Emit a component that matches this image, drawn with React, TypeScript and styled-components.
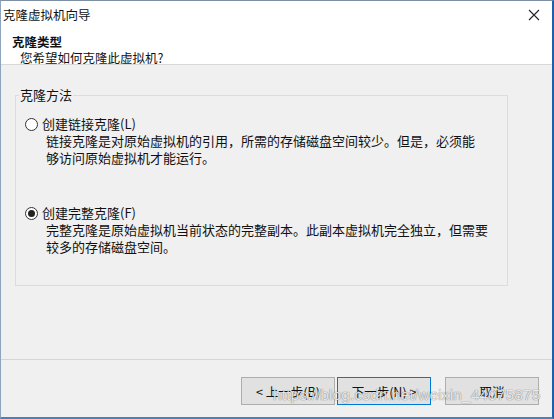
import styled, { createGlobalStyle } from "styled-components";
import { useState } from "react";

const GlobalStyle = createGlobalStyle`
  html, body {
    margin: 0;
    padding: 0;
    background: #f0f0f0;
  }
  #root {
    width: 554px;
    height: 419px;
  }
`;

const ui = `"Noto Sans CJK SC", "Liberation Sans", sans-serif`;

const Window = styled.div`
  position: relative;
  display: flex;
  flex-direction: column;
  width: 554px;
  height: 419px;
  box-sizing: border-box;
  border-top: 1px solid #7d8fa5;
  border-left: 1px solid #8ea3bd;
  border-right: 2px solid #1c5fae;
  border-bottom: 2px solid #4f7fb8;
  background: #f0f0f0;
  font-family: ${ui};
  color: #111;
  overflow: hidden;
`;

const Top = styled.div`
  background: #fff;
  border-bottom: 1px solid #d9d9d9;
`;

const TitleBar = styled.div`
  display: flex;
  align-items: center;
  justify-content: space-between;
  height: 27px;
  padding: 0 12px 0 2px;
`;

const TitleText = styled.span`
  font-size: 12.5px;
  line-height: 16px;
`;

const CloseBtn = styled.span`
  display: flex;
  width: 12px;
  height: 12px;
  margin-top: 1px;
`;

const Header = styled.div`
  display: flex;
  flex-direction: column;
  height: 36px;
  padding-left: 11px;
`;

const HeaderTitle = styled.span`
  font-size: 12.5px;
  font-weight: bold;
  line-height: 16px;
  margin-top: 6px;
`;

const HeaderSub = styled.span`
  font-size: 12.5px;
  line-height: 15px;
  padding-left: 8px;
`;

const Body = styled.div`
  flex: 1;
  padding: 22px 0 0 14px;
`;

const Group = styled.fieldset`
  width: 493px;
  height: 199px;
  box-sizing: border-box;
  margin: 0;
  padding: 0;
  border: 1px solid #dcdcdc;
`;

const Legend = styled.legend`
  margin-left: 3px;
  padding: 0 1px;
  font-size: 13px;
  line-height: 16px;
`;

const Options = styled.div`
  display: flex;
  flex-direction: column;
  gap: 39px;
  padding: 13px 0 0 9px;
`;

const Option = styled.label`
  display: flex;
  flex-direction: column;
  cursor: default;
`;

const OptionHead = styled.span`
  display: flex;
  align-items: center;
  gap: 4px;
  font-size: 13px;
  line-height: 16px;
`;

const Radio = styled.input.attrs({ type: "radio" })`
  appearance: none;
  margin: 0;
  width: 13px;
  height: 13px;
  border: 1px solid #333;
  border-radius: 50%;
  background: #fff;
  box-sizing: border-box;
  display: grid;
  place-content: center;
  &:checked::before {
    content: "";
    width: 7px;
    height: 7px;
    border-radius: 50%;
    background: #222;
  }
`;

const Desc = styled.span`
  padding-left: 21px;
  margin-top: 1px;
  font-size: 13px;
  line-height: 16.5px;
  white-space: nowrap;
`;

const Footer = styled.div`
  display: flex;
  justify-content: flex-end;
  align-items: flex-start;
  height: 58px;
  box-sizing: border-box;
  border-top: 1px solid #d5d5d5;
  padding: 17px 13px 0 0;
`;

const ButtonPair = styled.div`
  display: flex;
  gap: 2px;
  margin-right: 14px;
`;

const Button = styled.button<{ $focused?: boolean }>`
  width: 94px;
  height: 28px;
  box-sizing: border-box;
  background: #e1e1e1;
  border: 1px solid ${(p) => (p.$focused ? "#0078d7" : "#adadad")};
  border-radius: 0;
  font-family: ${ui};
  font-size: 12.5px;
  color: #111;
  padding: 0;
`;

const Watermark = styled.span`
  position: absolute;
  left: 272px;
  top: 385px;
  font-family: "Liberation Sans", Arial, sans-serif;
  font-size: 15.5px;
  letter-spacing: 0.1px;
  color: rgba(255, 255, 255, 0.85);
  text-shadow: 0 0 1px rgba(0, 0, 0, 0.45), 0 0 1px rgba(0, 0, 0, 0.3);
  pointer-events: none;
`;

function App() {
  const [mode, setMode] = useState("full");
  return (
    <>
      <GlobalStyle />
      <Window>
        <Top>
          <TitleBar>
            <TitleText>克隆虚拟机向导</TitleText>
            <CloseBtn>
              <svg width="12" height="12" viewBox="0 0 12 12">
                <path d="M1 1 L11 11 M11 1 L1 11" stroke="#222" strokeWidth="1.1" />
              </svg>
            </CloseBtn>
          </TitleBar>
          <Header>
            <HeaderTitle>克隆类型</HeaderTitle>
            <HeaderSub>您希望如何克隆此虚拟机?</HeaderSub>
          </Header>
        </Top>
        <Body>
          <Group>
            <Legend>克隆方法</Legend>
            <Options>
              <Option>
                <OptionHead>
                  <Radio
                    name="clone"
                    checked={mode === "linked"}
                    onChange={() => setMode("linked")}
                  />
                  创建链接克隆(L)
                </OptionHead>
                <Desc>
                  链接克隆是对原始虚拟机的引用，所需的存储磁盘空间较少。但是，必须能
                  <br />
                  够访问原始虚拟机才能运行。
                </Desc>
              </Option>
              <Option>
                <OptionHead>
                  <Radio
                    name="clone"
                    checked={mode === "full"}
                    onChange={() => setMode("full")}
                  />
                  创建完整克隆(F)
                </OptionHead>
                <Desc>
                  完整克隆是原始虚拟机当前状态的完整副本。此副本虚拟机完全独立，但需要
                  <br />
                  较多的存储磁盘空间。
                </Desc>
              </Option>
            </Options>
          </Group>
        </Body>
        <Footer>
          <ButtonPair>
            <Button>&lt; 上一步(B)</Button>
            <Button $focused>下一步(N) &gt;</Button>
          </ButtonPair>
          <Button>取消</Button>
        </Footer>
        <Watermark>https://blog.csdn.net/weixin_44075875</Watermark>
      </Window>
    </>
  );
}

export default App;
